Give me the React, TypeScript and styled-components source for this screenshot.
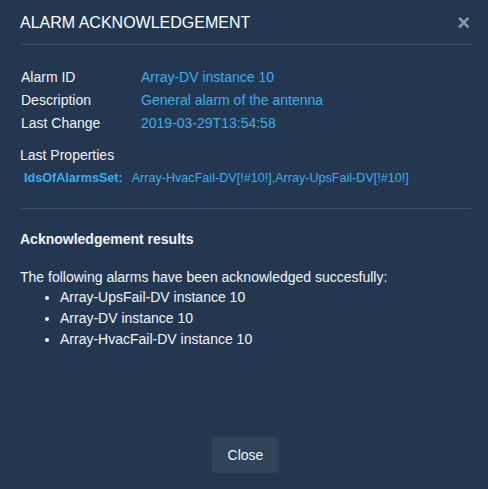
import React from "react";
import styled, { createGlobalStyle } from "styled-components";

const Global = createGlobalStyle`
  html, body { margin: 0; padding: 0; background: #233850; }
  body { font-family: "Liberation Sans", Arial, sans-serif; color: #f2f4f7; }
`;

const Modal = styled.div`
  width: 488px;
  height: 489px;
  box-sizing: border-box;
  padding: 0 17px 0 20px;
  display: flex;
  flex-direction: column;
`;

const Header = styled.div`
  height: 44px;
  display: flex;
  align-items: center;
  justify-content: space-between;
  border-bottom: 1px solid #3b4f66;
`;

const Title = styled.h4`
  margin: 0;
  font-size: 16px;
  font-weight: normal;
  color: #ffffff;
  padding-top: 2px;
`;

const CloseX = styled.span`
  font-size: 22px;
  font-weight: bold;
  color: #8b98a8;
  line-height: 1;
  padding-top: 2px;
  margin-right: 1px;
`;

const Section = styled.div<{ $pt: number; $pb: number; $border?: boolean }>`
  padding-top: ${(p) => p.$pt}px;
  padding-bottom: ${(p) => p.$pb}px;
  border-bottom: ${(p) => (p.$border ? "1px solid #3b4f66" : "none")};
`;

const InfoTable = styled.div`
  display: grid;
  grid-template-columns: 120px 1fr;
  row-gap: 6px;
  font-size: 14px;
  line-height: 17px;
  padding-left: 1px;
`;

const Label = styled.div`
  color: #f2f4f7;
`;

const Value = styled.div`
  color: #3badee;
`;

const SubHeading = styled.div`
  margin-top: 15px;
  font-size: 14px;
  line-height: 17px;
`;

const PropRow = styled.div`
  margin-top: 6px;
  padding-left: 4px;
  font-size: 12.6px;
  line-height: 17px;
  color: #3badee;
  display: flex;
  gap: 9px;
`;

const PropKey = styled.span`
  font-weight: bold;
`;

const ResultsTitle = styled.div`
  font-size: 14px;
  font-weight: bold;
  line-height: 17px;
`;

const Paragraph = styled.div`
  margin-top: 19px;
  font-size: 14px;
  line-height: 20px;
`;

const List = styled.ul`
  margin: 0;
  padding-left: 40px;
  font-size: 14px;
  line-height: 21px;
`;

const Footer = styled.div`
  margin-top: auto;
  padding-bottom: 16px;
  display: flex;
  justify-content: center;
`;

const Button = styled.button`
  width: 67px;
  height: 36px;
  border: none;
  border-radius: 4px;
  background: #2f4359;
  color: #f2f4f7;
  font-family: "Liberation Sans", Arial, sans-serif;
  font-size: 14px;
  padding: 0;
`;

export default function App() {
  return (
    <>
      <Global />
      <Modal>
        <Header>
          <Title>ALARM ACKNOWLEDGEMENT</Title>
          <CloseX>×</CloseX>
        </Header>
        <Section $pt={24} $pb={21} $border>
          <InfoTable>
            <Label>Alarm ID</Label>
            <Value>Array-DV instance 10</Value>
            <Label>Description</Label>
            <Value>General alarm of the antenna</Value>
            <Label>Last Change</Label>
            <Value>2019-03-29T13:54:58</Value>
          </InfoTable>
          <SubHeading>Last Properties</SubHeading>
          <PropRow>
            <PropKey>IdsOfAlarmsSet:</PropKey>
            <span>Array-HvacFail-DV[!#10!],Array-UpsFail-DV[!#10!]</span>
          </PropRow>
        </Section>
        <Section $pt={22} $pb={0}>
          <ResultsTitle>Acknowledgement results</ResultsTitle>
          <Paragraph>The following alarms have been acknowledged succesfully:</Paragraph>
          <List>
            <li>Array-UpsFail-DV instance 10</li>
            <li>Array-DV instance 10</li>
            <li>Array-HvacFail-DV instance 10</li>
          </List>
        </Section>
        <Footer>
          <Button>Close</Button>
        </Footer>
      </Modal>
    </>
  );
}
